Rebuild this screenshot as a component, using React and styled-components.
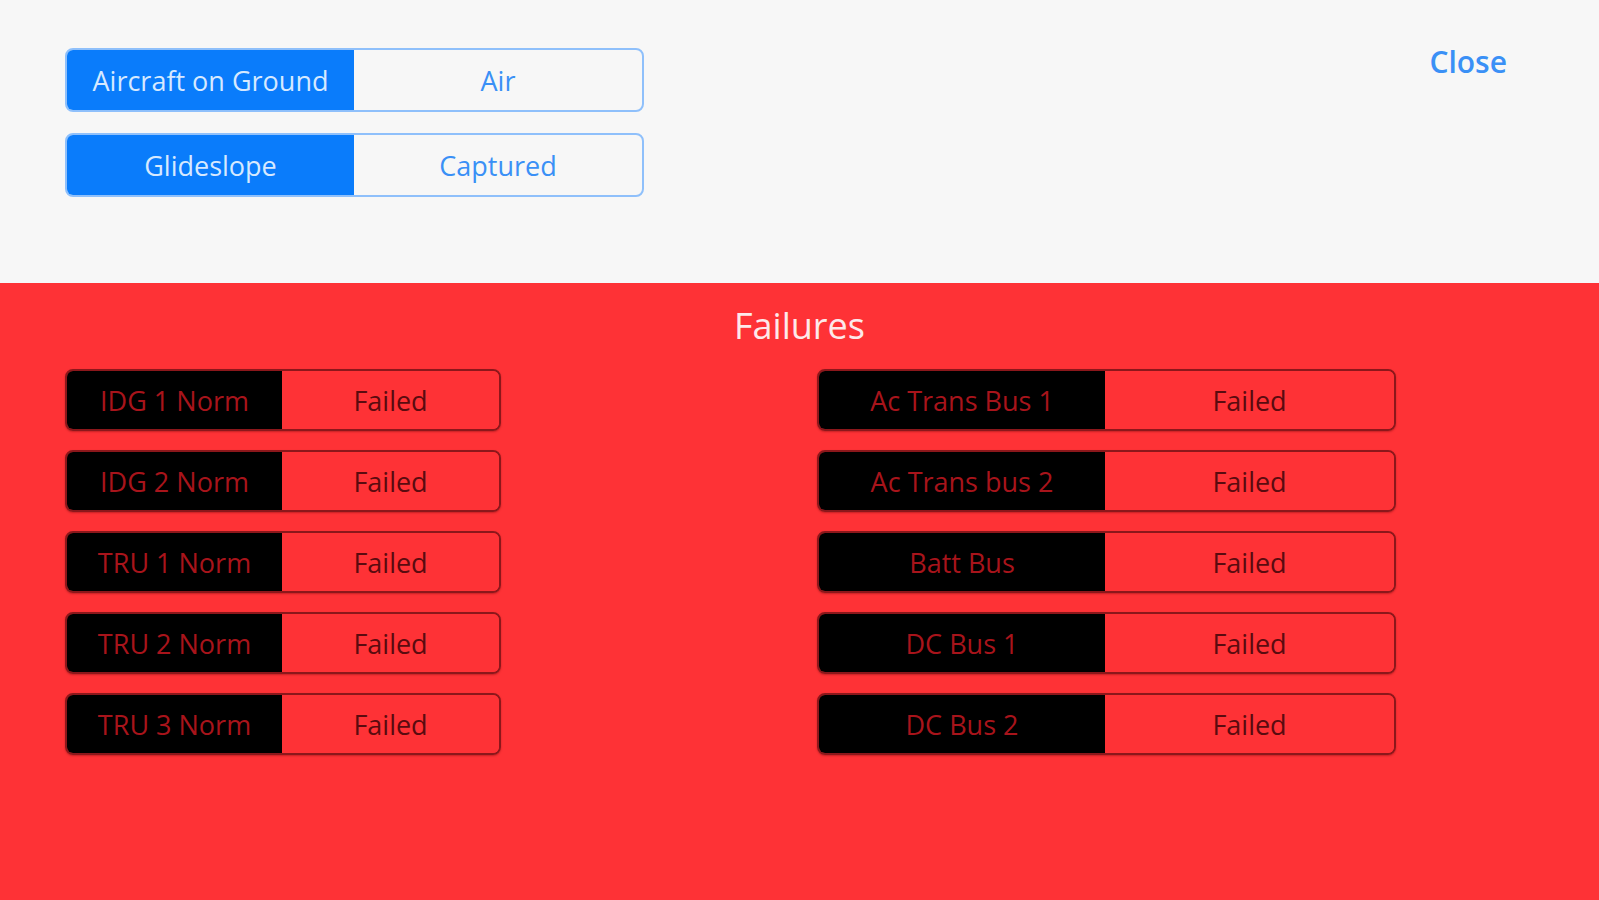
import React from 'react'
import styled, { createGlobalStyle } from 'styled-components'

const GlobalStyle = createGlobalStyle`
  html, body {
    margin: 0;
    padding: 0;
    height: 100%;
  }
  body {
    font-family: "Open Sans", "Noto Sans", sans-serif;
    background: #f7f7f7;
  }
`

const leftFailures = ['IDG 1 Norm', 'IDG 2 Norm', 'TRU 1 Norm', 'TRU 2 Norm', 'TRU 3 Norm']
const rightFailures = ['Ac Trans Bus 1', 'Ac Trans bus 2', 'Batt Bus', 'DC Bus 1', 'DC Bus 2']

function Segmented({ first, second }) {
    return (
        <SegmentBox>
            <Segment selected>{first}</Segment>
            <Segment>{second}</Segment>
        </SegmentBox>
    )
}

function FailureRow({ label, wide }) {
    return (
        <FailRow wide={wide}>
            <FailLabel>{label}</FailLabel>
            <FailState>Failed</FailState>
        </FailRow>
    )
}

export default function App() {
    return (
        <>
            <GlobalStyle />
            <Page>
                <TopPanel>
                    <Controls>
                        <Segmented first="Aircraft on Ground" second="Air" />
                        <Segmented first="Glideslope" second="Captured" />
                    </Controls>
                    <CloseButton>Close</CloseButton>
                </TopPanel>

                <FailurePanel>
                    <Title>Failures</Title>
                    <Columns>
                        <Column>
                            {leftFailures.map(f => <FailureRow key={f} label={f} />)}
                        </Column>
                        <Column>
                            {rightFailures.map(f => <FailureRow key={f} label={f} wide />)}
                        </Column>
                    </Columns>
                </FailurePanel>
            </Page>
        </>
    )
}

const Page = styled.div`
    display: flex;
    flex-direction: column;
    height: 900px;
    width: 1599px;
`

const TopPanel = styled.div`
    height: 283px;
    flex-shrink: 0;
    box-sizing: border-box;
    padding: 48px 92px 0 65px;
    display: flex;
    justify-content: space-between;
    align-items: flex-start;
    background: #f7f7f7;
`

const Controls = styled.div`
    display: flex;
    flex-direction: column;
    gap: 21px;
`

const SegmentBox = styled.div`
    display: flex;
    width: 579px;
    height: 64px;
    box-sizing: border-box;
    border: 2px solid #8fc0fb;
    border-radius: 8px;
    overflow: hidden;
    background: #f7f7f7;
`

const Segment = styled.div`
    flex: ${p => (p.selected ? '0 0 287px' : '1')};
    display: flex;
    align-items: center;
    justify-content: center;
    font-size: 27px;
    color: ${p => (p.selected ? '#d6e9ff' : '#3a90f6')};
    background: ${p => (p.selected ? '#0a7cfb' : 'transparent')};
`

const CloseButton = styled.div`
    margin-top: -7px;
    font-size: 30px;
    font-weight: 600;
    color: #3a90f6;
    cursor: pointer;
`

const FailurePanel = styled.div`
    flex: 1;
    background: #fe3236;
    display: flex;
    flex-direction: column;
    padding: 18px 0 0 65px;
`

const Title = styled.div`
    width: 1469px;
    text-align: center;
    font-size: 36px;
    color: #fde9ea;
    margin-bottom: 19px;
`

const Columns = styled.div`
    display: flex;
    gap: 316px;
`

const Column = styled.div`
    display: flex;
    flex-direction: column;
    gap: 19px;
`

const FailRow = styled.div`
    display: flex;
    width: ${p => (p.wide ? '579px' : '436px')};
    height: 62px;
    box-sizing: border-box;
    border: 2px solid #8c171b;
    border-radius: 8px;
    overflow: hidden;
    box-shadow: 0 1px 2px rgba(90, 0, 0, 0.35);

    & > div:first-child {
        flex: 0 0 ${p => (p.wide ? '286px' : '215px')};
    }
`

const FailLabel = styled.div`
    display: flex;
    align-items: center;
    justify-content: center;
    background: #000;
    color: #a8141b;
    font-size: 27px;
`

const FailState = styled.div`
    flex: 1;
    display: flex;
    align-items: center;
    justify-content: center;
    background: #fe3236;
    color: #5a0b0f;
    font-size: 27px;
`
